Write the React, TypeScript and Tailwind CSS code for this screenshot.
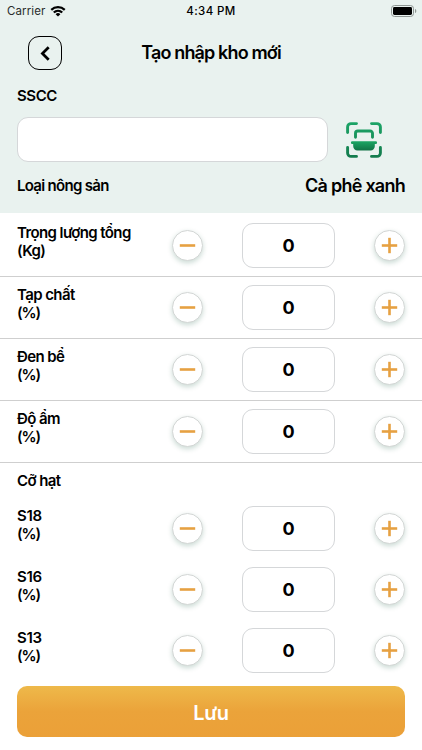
import { useState } from "react";

type Field = { key: string; label: string; unit: string };

const QUALITY_FIELDS: Field[] = [
  { key: "weight", label: "Trọng lượng tổng", unit: "(Kg)" },
  { key: "impurity", label: "Tạp chất", unit: "(%)" },
  { key: "broken", label: "Đen bể", unit: "(%)" },
  { key: "moisture", label: "Độ ẩm", unit: "(%)" },
];

const SIZE_FIELDS: Field[] = [
  { key: "s18", label: "S18", unit: "(%)" },
  { key: "s16", label: "S16", unit: "(%)" },
  { key: "s13", label: "S13", unit: "(%)" },
];

function StatusBar() {
  return (
    <div className="grid h-[23px] grid-cols-3 items-center pl-[7px] pr-[5px] text-[11.5px] leading-none">
      <div className="flex items-center gap-[5px]">
        <span className="tracking-[0.1px] text-[#2a2d2c]">Carrier</span>
        <svg className="relative -top-px" width="16" height="12" viewBox="0 0 16 12">
          <path d="M.5 4.1a10.8 10.8 0 0 1 15 0L14 5.7a8.6 8.6 0 0 0-12 0Z" />
          <path d="M3 6.7a7.2 7.2 0 0 1 10 0l-1.6 1.6a5 5 0 0 0-6.8 0Z" />
          <path d="M5.6 9.2a3.5 3.5 0 0 1 4.8 0L8 11.6Z" />
        </svg>
      </div>
      <span className="-ml-[2px] text-center font-medium tracking-[0.4px]">4:34 PM</span>
      <svg className="relative -top-px justify-self-end" width="26" height="12" viewBox="0 0 26 12">
        <rect x="0.5" y="0.5" width="22" height="11" rx="3" fill="none" stroke="#8f9794" />
        <rect x="2" y="2" width="19" height="8" rx="1.4" />
        <path d="M24 4v4c1-.4 1.3-1.2 1.3-2S25 4.4 24 4Z" fill="#8f9794" />
      </svg>
    </div>
  );
}

function ScanIcon() {
  return (
    <svg width="36" height="36" viewBox="0 0 36 36" fill="none">
      <defs>
        <linearGradient id="scan" x1="0" y1="0" x2="0" y2="36" gradientUnits="userSpaceOnUse">
          <stop stopColor="#1ca567" />
          <stop offset="1" stopColor="#137a4c" />
        </linearGradient>
        <linearGradient id="tray" x1="0" y1="19" x2="0" y2="29" gradientUnits="userSpaceOnUse">
          <stop stopColor="#1ca865" />
          <stop offset="1" stopColor="#117044" />
        </linearGradient>
      </defs>
      <g stroke="url(#scan)" strokeWidth="2.9" strokeLinecap="round" strokeLinejoin="round">
        <path d="M1.6 10.5V5A3.4 3.4 0 0 1 5 1.6h5.5" />
        <path d="M25.5 1.6H31A3.4 3.4 0 0 1 34.4 5v5.5" />
        <path d="M34.4 25.5V31a3.4 3.4 0 0 1-3.4 3.4h-5.5" />
        <path d="M10.5 34.4H5A3.4 3.4 0 0 1 1.6 31v-5.5" />
        <path d="M9.5 15.3v-4A2.3 2.3 0 0 1 11.8 9h12.4a2.3 2.3 0 0 1 2.3 2.3v4" />
      </g>
      <path
        d="M6.3 19.3h23.4a1.4 1.4 0 0 1 0 2.8h-.9v2.2a4.2 4.2 0 0 1-4.2 4.2H11.4a4.2 4.2 0 0 1-4.2-4.2v-2.2h-.9a1.4 1.4 0 0 1 0-2.8Z"
        fill="url(#tray)"
      />
    </svg>
  );
}

function RoundButton({ plus, onClick }: { plus?: boolean; onClick: () => void }) {
  return (
    <button
      onClick={onClick}
      className="flex size-[31px] shrink-0 items-center justify-center rounded-full border border-[#d3d6d5] bg-white shadow-[0_2px_5px_rgba(22,90,65,0.22)]"
    >
      <svg width="17" height="17" viewBox="0 0 17 17" stroke="#e6a142" strokeWidth="2.6">
        <path d="M0.8 8.5h15.4" />
        {plus && <path d="M8.5 0.8v15.4" />}
      </svg>
    </button>
  );
}

function FieldRow({
  field,
  value,
  onChange,
}: {
  field: Field;
  value: number;
  onChange: (value: number) => void;
}) {
  return (
    <div className="flex h-[45px] items-center">
      <div className="w-[155px] shrink-0 self-start whitespace-nowrap pt-px text-[15px] font-semibold leading-[18px]">
        <p className={field.label.length > 3 ? "tracking-[-0.6px]" : "tracking-[-0.3px]"}>{field.label}</p>
        <p className={field.unit === "(%)" ? "tracking-[-1.1px]" : "tracking-[-0.6px]"}>{field.unit}</p>
      </div>
      <RoundButton onClick={() => onChange(Math.max(0, value - 1))} />
      <div className="ml-[39px] mr-[39px] flex h-[45px] w-[93px] items-center justify-center rounded-[11px] border border-[#d5d7d9] text-lg font-bold">
        <span>{value}</span>
      </div>
      <RoundButton plus onClick={() => onChange(value + 1)} />
    </div>
  );
}

export default function App() {
  const [sscc, setSscc] = useState("");
  const [values, setValues] = useState<Record<string, number>>({});

  const setValue = (key: string, value: number) => setValues((prev) => ({ ...prev, [key]: value }));

  return (
    <div className="flex h-[750px] w-[422px] flex-col overflow-hidden bg-white font-['Inter','Liberation_Sans',sans-serif] text-black">
      <header className="h-[213px] shrink-0 bg-[#e9f2ef]">
        <StatusBar />
        <div className="mt-[13px] grid h-[34px] grid-cols-[62px_1fr_62px] items-center">
          <button className="ml-[28px] flex size-[34px] items-center justify-center rounded-[11px] border-[1.5px] border-black">
            <svg width="10" height="15" viewBox="0 0 10 15" fill="none" stroke="black" strokeWidth="2.7">
              <path d="M8.7 1.2 2.4 7.5l6.3 6.3" />
            </svg>
          </button>
          <h1 className="text-center text-lg font-semibold tracking-[-0.85px]">Tạo nhập kho mới</h1>
        </div>

        <div className="px-[17px]">
          <label className="mt-[16px] block text-[15px] font-semibold leading-5 tracking-[-0.4px]">SSCC</label>
          <div className="mt-[11px] flex items-center">
            <input
              className="h-[45px] w-[311px] rounded-[11px] border border-[#d5d7d9] bg-white px-3 outline-none"
              value={sscc}
              onChange={(e) => setSscc(e.target.value)}
            />
            <button className="ml-[18px]">
              <ScanIcon />
            </button>
          </div>
          <div className="mt-[12px] flex h-6 items-center justify-between whitespace-nowrap">
            <span className="text-[15px] font-semibold tracking-[-0.7px]">Loại nông sản</span>
            <span className="text-lg font-semibold tracking-[-0.75px]">Cà phê xanh</span>
          </div>
        </div>
      </header>

      <main className="-mt-px">
        {QUALITY_FIELDS.map((field, i) => (
          <div
            key={field.key}
            className={
              i === 0
                ? "h-[65px] border-b border-[#cfcfcf] px-[17px] pt-[11px]"
                : "h-[62px] border-b border-[#cfcfcf] px-[17px] pt-[8px]"
            }
          >
            <FieldRow field={field} value={values[field.key] ?? 0} onChange={(v) => setValue(field.key, v)} />
          </div>
        ))}

        <p className="mt-[8px] px-[17px] text-[15px] font-semibold leading-5 tracking-[-0.6px]">Cỡ hạt</p>
        <div className="mt-[15px] flex flex-col gap-4 px-[17px]">
          {SIZE_FIELDS.map((field) => (
            <FieldRow
              key={field.key}
              field={field}
              value={values[field.key] ?? 0}
              onChange={(v) => setValue(field.key, v)}
            />
          ))}
        </div>

        <button className="mx-[17px] mt-[13px] block h-[51px] w-[388px] rounded-[10px] bg-linear-to-b from-[#eeb94a] via-[#eba33a] via-50% to-[#eba038] pt-[2px] text-[20px] font-semibold tracking-[-0.4px] text-white">
          Lưu
        </button>
      </main>
    </div>
  );
}
